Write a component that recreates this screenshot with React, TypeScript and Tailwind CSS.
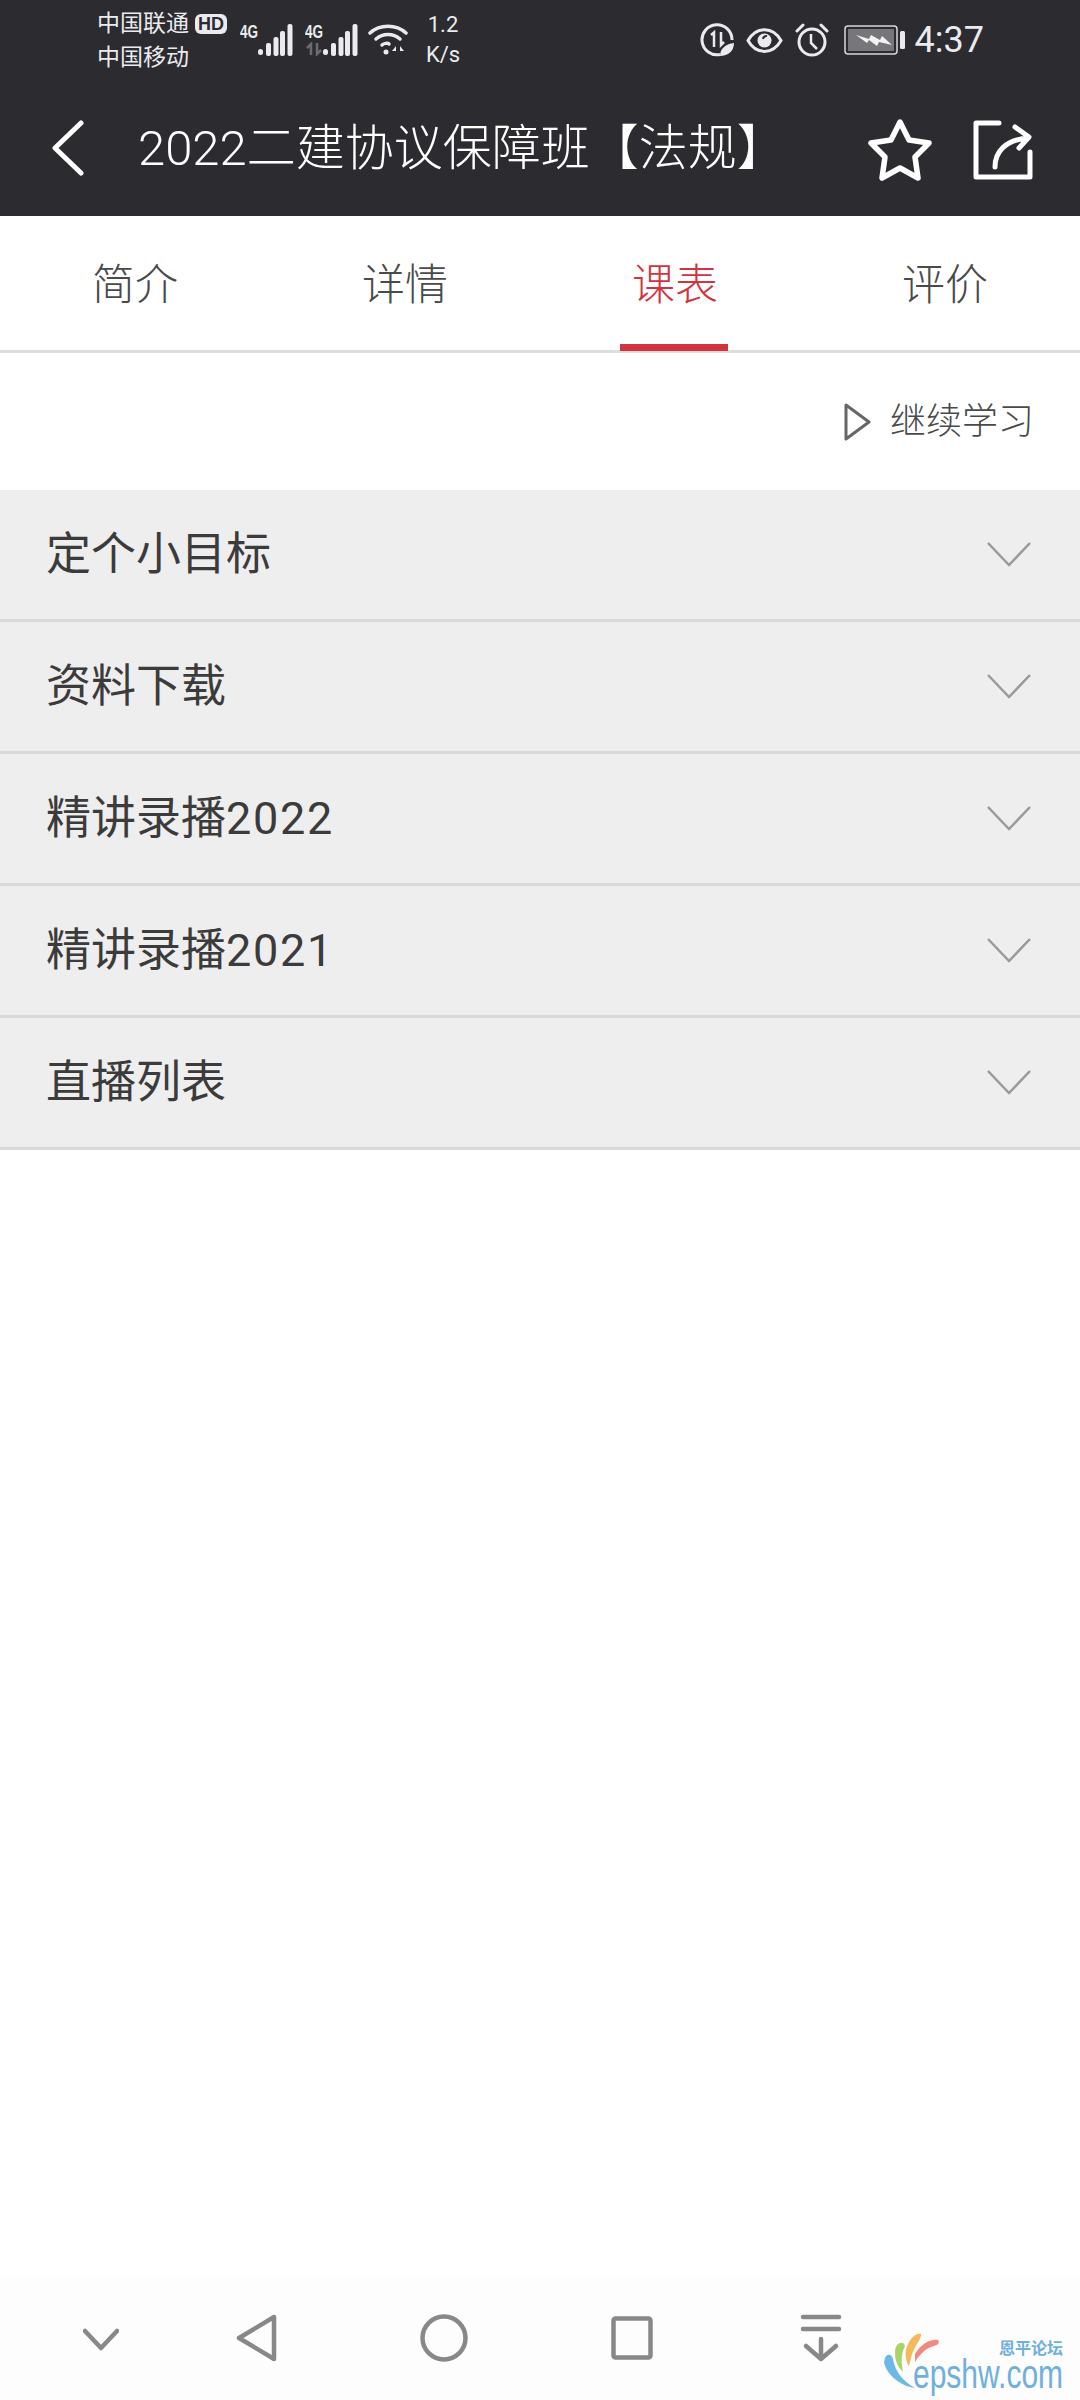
import React from "react";

const CJK = { fontFamily: '"Roboto", "Noto Sans CJK SC", sans-serif' };
const SANS = { fontFamily: '"Liberation Sans", sans-serif' };

function Signal() {
  return (
    <svg width="35" height="32" viewBox="0 0 35 32" fill="#ebebef">
      <rect x="0" y="25" width="5" height="6" rx="2.5" />
      <rect x="8" y="19" width="5" height="13" rx="2" />
      <rect x="15.500" y="13" width="5" height="19" rx="2" />
      <rect x="22" y="7" width="5" height="25" rx="2" />
      <rect x="29.500" y="0" width="5" height="32" rx="2" />
    </svg>
  );
}

function Row({ label, year }: { label: string; year?: string }) {
  return (
    <div className="flex h-[132px] items-center justify-between border-b-[3px] border-[#d9d9d9] bg-[#eeeeee] pl-[46px] pr-[49px]">
      <span className="text-[45px] leading-none text-[#3b3b3b]">
        {label}
        {year && <span className="tracking-[1.700px]">{year}</span>}
      </span>
      <svg className="mb-[2px]" width="44" height="26" viewBox="0 0 44 26" fill="none" stroke="#9a9a9a" strokeWidth="2.500">
        <path d="M1 2 L22 24 L43 2" />
      </svg>
    </div>
  );
}

export default function App() {
  return (
    <div className="relative flex h-[2400px] w-[1080px] flex-col overflow-hidden bg-white" style={CJK}>
      <header className="bg-[#2b2b30] text-white">
        <div className="flex h-[80px] items-center pl-[97px] pr-[96px] text-[#ebebef]">
          <div className="mt-[2px] flex w-[143px] flex-col text-[23px] leading-[34px]">
            <div className="flex items-center gap-[6px]">
              <span>中国联通</span>
              <span className="rounded-[6px] bg-[#ebebef] px-[3px] text-[18px] font-bold leading-[20px] text-[#2b2b30]" style={SANS}>HD</span>
            </div>
            <span>中国移动</span>
          </div>
          <div className="flex items-end">
            <span className="mb-[16px] w-[18px] origin-left scale-x-[0.75] text-[18px] font-bold leading-[16px]" style={SANS}>4G</span>
            <Signal />
          </div>
          <div className="ml-[12px] flex items-end">
            <div className="relative w-[18px]">
              <span className="mb-[16px] block origin-left scale-x-[0.75] text-[18px] font-bold leading-[16px]" style={SANS}>4G</span>
              <svg className="absolute bottom-[0px] left-0" width="18" height="14" viewBox="0 0 18 14" fill="none" stroke="#6c6c70" strokeWidth="2.500">
                <path d="M6 13 V2 L2 6 M12 1 V12 L16 8" />
              </svg>
            </div>
            <Signal />
          </div>
          <svg className="ml-[10px]" width="40" height="32" viewBox="0 0 40 32" fill="none" stroke="#ebebef" strokeWidth="3.500" strokeLinecap="round">
            <path d="M2 9 C12 0 28 0 38 9" />
            <path d="M8 15 C15 9 25 9 32 15" />
            <path d="M14 21 C16 19 20 19 21 20" />
            <circle cx="18" cy="28" r="2.500" fill="#ebebef" stroke="none" />
            <path d="M28 22 L24 27 H28 Z M32 22 L36 27 H32 Z" fill="#ebebef" stroke="none" />
          </svg>
          <div className="ml-[13px] flex w-[44px] flex-col items-center text-[22px] leading-[30px]" style={{ fontFamily: '"Roboto", sans-serif' }}>
            <span>1.2</span>
            <span>K/s</span>
          </div>
          <div className="ml-auto flex items-center">
            <svg width="34" height="34" viewBox="0 0 34 34" fill="none" stroke="#ebebef" strokeWidth="3">
              <path d="M20 31.500 A15 15 0 1 1 32 17" />
              <path d="M11 12 L14 9.500 V24 M21 9 V22 L24 19" strokeWidth="2.500" />
              <path d="M20 33 C20 25 26 21 34 20 C34 28 28 33 20 33 Z" fill="#ebebef" stroke="none" />
            </svg>
            <svg className="ml-[12px]" width="37" height="27" viewBox="0 0 37 27" fill="none" stroke="#ebebef" strokeWidth="3">
              <path d="M2 13.500 C10 -1 27 -1 35 13.500 C27 28 10 28 2 13.500 Z" />
              <circle cx="18.500" cy="13.500" r="7" fill="#ebebef" stroke="none" />
              <path d="M17 12 A3.500 3.500 0 0 1 21 9" stroke="#2b2b30" strokeWidth="2" />
            </svg>
            <svg className="ml-[12px]" width="34" height="34" viewBox="0 0 34 34" fill="none" stroke="#ebebef" strokeWidth="3">
              <circle cx="17" cy="19" r="13" />
              <path d="M16 11 V20 L22 26" strokeWidth="2.500" />
              <path d="M2 8 L8 2 M32 8 L26 2" strokeLinecap="round" />
            </svg>
            <svg className="ml-[15px]" width="62" height="30" viewBox="0 0 62 30">
              <rect x="1" y="1" width="52" height="28" rx="3" fill="none" stroke="#d8d8dc" strokeWidth="1.500" />
              <rect x="4" y="4" width="46" height="22" fill="#77777b" />
              <rect x="56" y="6" width="5" height="18" rx="1.500" fill="#ebebef" />
              <path d="M12 10 L25 14 L27 10 L36 15 L38 11 L48 20 L35 17 L33 21 L25 15 L23 18 Z" fill="#f2f2f2" />
            </svg>
            <span className="ml-[9px] text-[36px] leading-none" style={{ fontFamily: '"Roboto", sans-serif' }}>4:37</span>
          </div>
        </div>
        <div className="flex h-[136px] items-center pl-[52px] pr-[47px]">
          <svg width="32" height="56" viewBox="0 0 32 56" fill="none" stroke="#ffffff" strokeWidth="5" strokeLinecap="round" strokeLinejoin="round">
            <path d="M29 3 L3 28 L29 53" />
          </svg>
          <h1 className="ml-[54px] text-[49px] font-light leading-none text-white">2022二建协议保障班【法规】</h1>
          <svg className="ml-auto mt-[4px]" width="66" height="64" viewBox="0 0 66 64" fill="none" stroke="#ffffff" strokeWidth="5.500" strokeLinejoin="round">
            <path d="M33 4 L42 22 L62 25 L48 39 L51 60 L33 50 L15 60 L18 39 L4 25 L24 22 Z" />
          </svg>
          <svg className="ml-[40px] mt-[4px]" width="60" height="60" viewBox="0 0 60 60" fill="none" stroke="#ffffff" strokeWidth="5" strokeLinecap="round" strokeLinejoin="round">
            <path d="M26 3 H3 V57 H57 V32" />
            <path d="M22 47 C22 32 32 20 55 18 M42 7 L56 17 L46 28" />
          </svg>
        </div>
      </header>

      <nav className="grid h-[137px] grid-cols-4 items-center border-b-[3px] border-[#dddddd] pt-[4px] text-[43px] font-light leading-none text-[#4a4a4a]">
        <span className="text-center">简介</span>
        <span className="text-center">详情</span>
        <span className="relative flex h-full items-center justify-center text-[#d2333c]">
          课表
          <span className="absolute bottom-[-1px] left-[80px] h-[7px] w-[108px] bg-[#d2333c]" />
        </span>
        <span className="text-center">评价</span>
      </nav>

      <div className="flex h-[137px] items-center justify-end pr-[46px]">
        <svg width="28" height="38" viewBox="0 0 28 38" fill="none" stroke="#666666" strokeWidth="3" strokeLinejoin="round">
          <path d="M2 2 L25 19 L2 36 Z" />
        </svg>
        <span className="ml-[18px] text-[36px] font-light leading-none text-[#4a4a4a]">继续学习</span>
      </div>

      <div className="flex flex-col">
        <Row label="定个小目标" />
        <Row label="资料下载" />
        <Row label="精讲录播" year="2022" />
        <Row label="精讲录播" year="2021" />
        <Row label="直播列表" />
      </div>

      <div className="mt-auto flex h-[125px] items-start bg-[#fdfdfd] pl-[83px] pt-[39px]">
        <svg className="mt-[14px]" width="36" height="24" viewBox="0 0 36 24" fill="none" stroke="#888888" strokeWidth="4.500" strokeLinecap="round" strokeLinejoin="round">
          <path d="M2 3 L18 20 L34 3" />
        </svg>
        <svg className="ml-[117px]" width="42" height="48" viewBox="0 0 42 48" fill="none" stroke="#888888" strokeWidth="4.500" strokeLinejoin="round">
          <path d="M38 3 V45 L3 24 Z" />
        </svg>
        <svg className="ml-[142px]" width="48" height="48" viewBox="0 0 48 48" fill="none" stroke="#888888" strokeWidth="4.500">
          <circle cx="24" cy="24" r="21.500" />
        </svg>
        <svg className="ml-[143px] mt-[2px]" width="42" height="44" viewBox="0 0 42 44" fill="none" stroke="#888888" strokeWidth="4.500" strokeLinejoin="round">
          <rect x="2.500" y="2.500" width="37" height="39" rx="2" />
        </svg>
        <svg className="ml-[147px]" width="42" height="48" viewBox="0 0 42 48" fill="none" stroke="#888888" strokeWidth="4.500" strokeLinecap="round" strokeLinejoin="round">
          <path d="M3 3 H39 M3 15 H39 M21 25 V45 M6 32 L21 45 L36 32" />
        </svg>
      </div>

      <div className="absolute left-[880px] top-[2330px] h-[64px] w-[190px]">
        <svg className="absolute left-0 top-0" width="70" height="62" viewBox="0 0 70 62">
          <path d="M5 28 C7 23 12 24 13 29 C15 42 24 52 35 58 C20 56 6 44 4 32 Z" fill="#6cb9e6" />
          <path d="M15 22 C15 12 24 10 25 16 C21 24 21 32 23 42 C17 36 15 30 15 22 Z" fill="#a9d36c" />
          <path d="M26 20 C28 10 36 2 41 4 C42 8 36 14 32 24 L29 36 C26 32 25 26 26 20 Z" fill="#f4b95c" />
          <path d="M35 24 C41 14 50 9 58 10 C60 13 58 15 54 16 C46 18 40 24 35 32 Z" fill="#f08a80" />
        </svg>
        <span className="absolute right-[7px] top-[11px] text-[16px] font-bold leading-[16px] text-[#6fb0dc]">恩平论坛</span>
        <span className="absolute left-[33px] top-[28px] origin-left scale-x-[0.75] whitespace-nowrap text-[40px] leading-[32px] text-[#6fb0dc]" style={SANS}>epshw.com</span>
      </div>
    </div>
  );
}
